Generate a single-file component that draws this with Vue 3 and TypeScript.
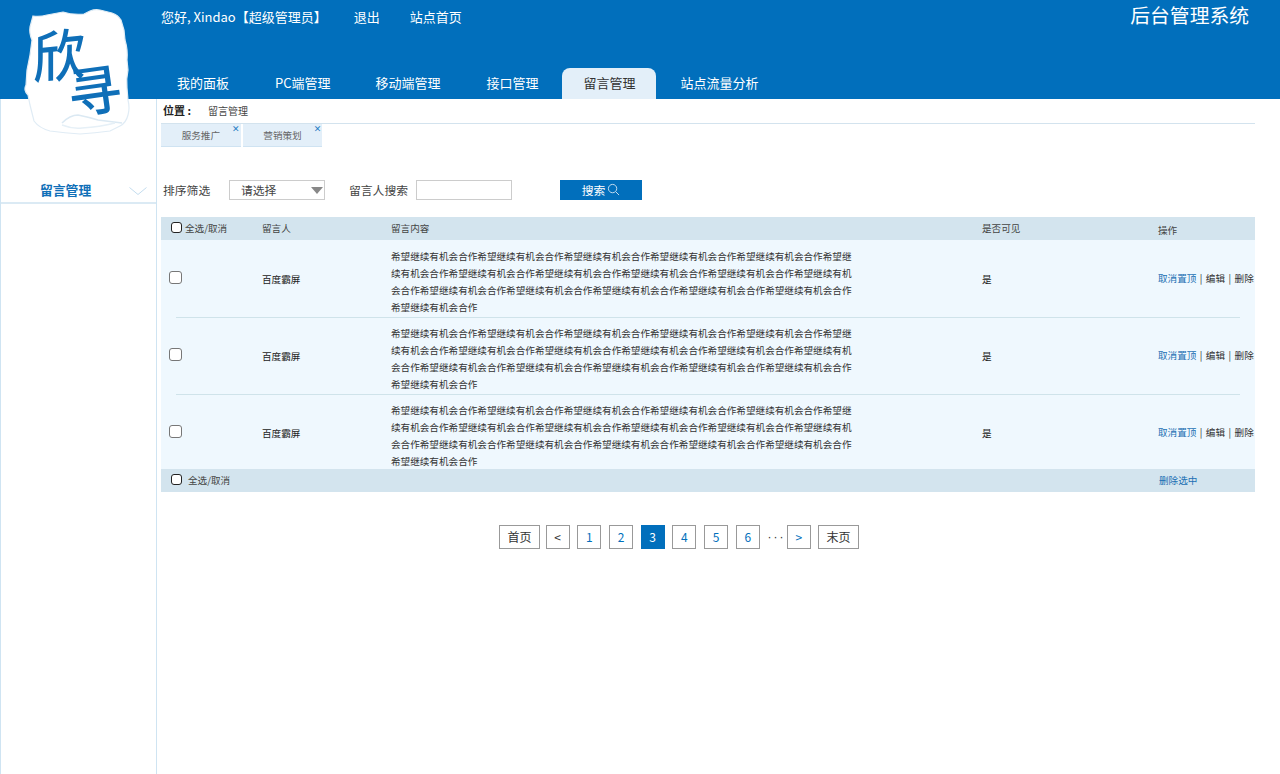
<script setup lang="ts">
const navItems = ["我的面板", "PC端管理", "移动端管理", "接口管理", "留言管理", "站点流量分析"]
const activeNav = "留言管理"
const tabs = ["服务推广", "营销策划"]
const body = "希望继续有机会合作".repeat(17)
const rows = [1, 2, 3]
const pages = [1, 2, 3, 4, 5, 6]
const currentPage = 3
</script>

<template>
  <div class="page">
    <header class="header">
      <div class="header-main">
        <div class="user-bar">
          <span class="greeting">您好, Xindao【超级管理员】</span>
          <a>退出</a>
          <a>站点首页</a>
        </div>
        <nav class="nav">
          <a v-for="item in navItems" :key="item" class="nav-item" :class="{ 'is-active': item === activeNav }">
            {{ item }}
          </a>
        </nav>
      </div>
      <div class="system-title">后台管理系统</div>
    </header>

    <div class="logo">
      <svg viewBox="0 0 115 135" width="115" height="135" aria-hidden="true">
        <path
          d="M13 11 Q20 12 27 10 L43 7 Q52 10 64 9 L70 6 Q75 4 80 5 L92 8 Q98 10 101 15 L104 25 L105 35 Q108 45 107 55 L108 65 Q106 74 107 83 L108 95 Q110 103 108 110 Q106 118 100 121 L90 126 Q75 128 60 129 Q45 128 30 126 Q19 123 14 116 L10 100 L8 90 Q3 85 6 80 L7 65 L10 50 L12 35 Q9 28 10 22 Z"
          fill="#ffffff"
          stroke="#e0ecf5"
          stroke-width="1.2"
        />
        <path d="M42 118 Q50 110 58 110 Q68 112 78 115 L102 118" fill="none" stroke="#dbe9f3" stroke-width="1.5" />
        <path d="M42 120 Q52 124 62 123 Q80 122 95 118" fill="none" stroke="#e6f0f7" stroke-width="1.5" />
      </svg>
      <span class="logo-text logo-xin">欣</span>
      <span class="logo-text logo-xun">寻</span>
    </div>

    <div class="body">
      <aside class="sidebar">
        <div class="side-item">
          <span>留言管理</span>
          <svg class="side-arrow" viewBox="0 0 18 8" width="18" height="8" aria-hidden="true">
            <path d="M0.5 0.5 L9 7.5 L17.5 0.5" fill="none" stroke="#c3dcee" stroke-width="1" />
          </svg>
        </div>
      </aside>

      <main class="content">
        <div class="crumb">
          <b>位置 :</b>
          <span>留言管理</span>
        </div>

        <div class="tabs">
          <div v-for="tab in tabs" :key="tab" class="tab">
            {{ tab }}
            <span class="tab-close">×</span>
          </div>
        </div>

        <div class="filters">
          <label class="filter-label">排序筛选</label>
          <div class="select">
            请选择
            <i class="select-arrow"></i>
          </div>
          <label class="filter-label search-label">留言人搜索</label>
          <div class="input"></div>
          <button type="button" class="search-btn">
            搜索
            <svg viewBox="0 0 14 14" width="13" height="13" aria-hidden="true">
              <circle cx="6" cy="6" r="4.5" fill="none" stroke="#cfe3f3" stroke-width="1" />
              <path d="M9.5 9.5 L13 13" stroke="#cfe3f3" stroke-width="1" />
            </svg>
          </button>
        </div>

        <section class="table">
          <div class="t-row t-head">
            <div class="c-check"><i class="box small"></i><span>全选/取消</span></div>
            <div>留言人</div>
            <div>留言内容</div>
            <div>是否可见</div>
            <div class="c-op-head">操作</div>
          </div>
          <div v-for="row in rows" :key="row" class="t-row t-item">
            <div class="c-check c-item-check"><i class="box"></i></div>
            <div class="c-name">百度霸屏</div>
            <div class="c-body">{{ body }}</div>
            <div class="c-name">是</div>
            <div class="c-op">
              <a>取消置顶</a> | 编辑 | 删除
            </div>
          </div>
          <div class="t-row t-foot">
            <div class="c-check"><i class="box small"></i><span class="foot-all">全选/取消</span></div>
            <div></div>
            <div></div>
            <div></div>
            <div class="foot-del"><a>删除选中</a></div>
          </div>
        </section>

        <div class="pager">
          <a class="pg wide first">首页</a>
          <a class="pg dark">&lt;</a>
          <a v-for="p in pages" :key="p" class="pg" :class="{ 'is-current': p === currentPage }">{{ p }}</a>
          <span class="dots">···</span>
          <a class="pg">&gt;</a>
          <a class="pg wide last">末页</a>
        </div>
      </main>
    </div>
  </div>
</template>

<style scoped>
.page {
  position: relative;
  display: flex;
  flex-direction: column;
  height: 774px;
  overflow: hidden;
  background: #fff;
  color: #333;
  font-family: "Noto Sans CJK SC", "Liberation Sans", sans-serif;
}

.header {
  display: flex;
  justify-content: space-between;
  flex: 0 0 99px;
  background: #016fbc;
  color: #fff;
}

.header-main {
  display: flex;
  flex-direction: column;
  justify-content: space-between;
  padding-left: 154px;
}

.user-bar {
  display: flex;
  gap: 27px;
  padding: 9px 0 0 7px;
  font-size: 13px;
  line-height: 16px;
}

.user-bar a + a {
  margin-left: 3px;
}

.nav {
  display: flex;
}

.nav-item {
  height: 31px;
  padding: 0 23px;
  border-radius: 8px 8px 0 0;
  font-size: 13px;
  line-height: 30px;
  white-space: nowrap;
}

.nav-item:nth-child(2) {
  padding-right: 22px;
}

.nav-item.is-active {
  margin-right: 2px;
  padding: 0 20px 0 22px;
  background: #e3eff9;
  color: #333;
}

.system-title {
  padding: 3px 31px 0 0;
  font-size: 19.8px;
  line-height: 24px;
}

.logo {
  position: absolute;
  top: 5px;
  left: 20px;
  width: 115px;
  height: 135px;
}

.logo-text {
  position: absolute;
  color: #0f6fb8;
  font-weight: 500;
  line-height: 1;
}

.logo-xin {
  top: 22px;
  left: 13px;
  font-size: 52px;
  transform: skewY(-6deg) scaleY(1.08);
}

.logo-xun {
  top: 56px;
  left: 47px;
  font-size: 54px;
  transform: rotate(-8deg);
}

.body {
  display: flex;
  flex: 1;
  min-height: 0;
}

.sidebar {
  flex: 0 0 157px;
  box-sizing: border-box;
  border-right: 1px solid #cfe4f2;
  border-left: 1px solid #cfe4f2;
  padding-top: 79px;
}

.side-item {
  display: flex;
  align-items: center;
  justify-content: space-between;
  height: 24px;
  padding: 0 9px 0 39px;
  border-bottom: 2px solid #dbeaf4;
  color: #0f6fb8;
  font-size: 12.8px;
  font-weight: 700;
}

.side-item span {
  padding-bottom: 2px;
}

.side-arrow {
  margin-top: 2px;
}

.content {
  flex: 1;
  min-width: 0;
  padding: 0 25px 0 4px;
}

.crumb {
  display: flex;
  align-items: center;
  gap: 11px;
  height: 25px;
  padding: 0 0 2px 2px;
  border-bottom: 1px solid #d3e3ee;
  box-sizing: border-box;
  font-size: 10px;
  color: #444;
}

.crumb b {
  width: 34px;
  color: #222;
  font-size: 11px;
  white-space: nowrap;
}

.tabs {
  display: flex;
  gap: 2px;
  height: 23px;
}

.tab {
  position: relative;
  width: 79.7px;
  box-sizing: border-box;
  border-bottom: 1px solid #cfe3f2;
  background: #e3eff9;
  color: #666;
  font-size: 9.6px;
  line-height: 23px;
  text-align: center;
}

.tab-close {
  position: absolute;
  top: 0;
  right: 1px;
  color: #1a78c2;
  font-size: 8px;
  font-weight: 700;
  line-height: 9px;
}

.filters {
  display: flex;
  align-items: center;
  height: 20px;
  margin-top: 33px;
  padding-left: 2px;
  font-size: 11.8px;
  color: #444;
}

.filter-label {
  width: 66px;
  padding-bottom: 2px;
  white-space: nowrap;
}

.search-label {
  width: 67px;
  margin-left: 24px;
}

.select {
  position: relative;
  width: 96px;
  height: 20px;
  box-sizing: border-box;
  padding-left: 11px;
  border: 1px solid #ccc;
  line-height: 17px;
}

.select-arrow {
  position: absolute;
  top: 6px;
  right: 1px;
  border-top: 7px solid #888;
  border-right: 6px solid transparent;
  border-left: 6px solid transparent;
}

.input {
  width: 96px;
  height: 20px;
  box-sizing: border-box;
  border: 1px solid #ccc;
}

.search-btn {
  display: flex;
  align-items: center;
  justify-content: center;
  gap: 2px;
  width: 82px;
  height: 20px;
  margin-left: 48px;
  padding: 0 0 2px;
  border: 0;
  background: #016fbc;
  color: #fff;
  font: inherit;
}

.table {
  margin-top: 17px;
}

.t-row {
  display: grid;
  grid-template-columns: 101px 129px 591px 176px 97px;
  align-items: center;
  font-size: 9.6px;
  color: #444;
}

.t-head,
.t-foot {
  height: 23px;
  background: #d3e4ee;
}

.t-head > div,
.t-foot > div {
  padding-bottom: 2px;
}

.t-head .c-op-head {
  padding: 2px 0 0;
}

.t-item {
  position: relative;
  height: 77px;
  overflow: hidden;
  align-items: start;
  background: #eff8fe;
  color: #333;
}

.t-item + .t-item::before {
  content: "";
  position: absolute;
  top: 0;
  right: 15px;
  left: 15px;
  border-top: 1px solid #cfe3ea;
}

.t-item:nth-of-type(4) {
  height: 75px;
}

.c-check {
  display: flex;
  align-items: center;
  gap: 3px;
  padding-left: 9px;
}

.c-item-check {
  padding-top: 31px;
  padding-left: 8px;
}

.box {
  display: block;
  width: 13px;
  height: 13px;
  box-sizing: border-box;
  border: 1px solid #777;
  border-radius: 3px;
  background: #fff;
}

.box.small {
  width: 11px;
  height: 11px;
  margin-left: 1px;
  border-color: #222;
}

.foot-all {
  margin-left: 3px;
}

.c-name {
  padding-top: 32px;
  color: #222;
  line-height: 14px;
}

.c-body {
  width: 462px;
  padding-top: 7.5px;
  line-height: 17px;
  word-break: break-all;
}

.c-op {
  padding-top: 31px;
  line-height: 14px;
  word-spacing: 1.3px;
  white-space: nowrap;
}

.c-op a,
.t-foot a {
  color: #1a6fb3;
}

.foot-del {
  margin-left: 1px;
}

.pager {
  display: flex;
  gap: 7.7px;
  align-items: center;
  margin-top: 33px;
  padding-left: 338px;
}

.pg {
  width: 24px;
  height: 24px;
  box-sizing: border-box;
  border: 1px solid #999;
  color: #016fbc;
  font-size: 12px;
  line-height: 22px;
  text-align: center;
}

.pg.wide {
  width: 41px;
  color: #333;
}

.pg.first {
  margin-right: -2.1px;
}

.pg.last {
  margin-left: -0.7px;
}

.pg.dark {
  color: #333;
}

.pg.is-current {
  border-color: #016fbc;
  background: #016fbc;
  color: #fff;
}

.dots {
  width: 14px;
  margin-right: -2.2px;
  color: #333;
  font-family: "Liberation Sans", sans-serif;
  font-size: 12px;
  letter-spacing: 2px;
  white-space: nowrap;
}
</style>
